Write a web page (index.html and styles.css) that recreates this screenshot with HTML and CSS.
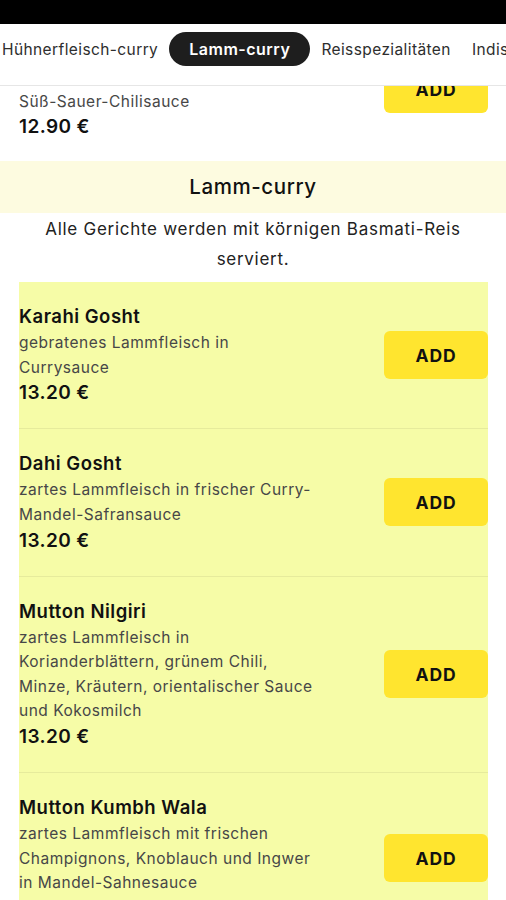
FILE: index.html
```html
<!DOCTYPE html>
<html lang="de">
<head>
<meta charset="utf-8">
<title>Lamm-curry</title>
<link rel="stylesheet" href="styles.css">
</head>
<body>
<div class="app">
  <div class="status-bar"></div>
  <nav class="tabs">
    <div class="tabs-track">
      <span class="tab">Hühnerfleisch-curry</span>
      <span class="tab tab-active">Lamm-curry</span>
      <span class="tab">Reisspezialitäten</span>
      <span class="tab">Indische Brote</span>
    </div>
  </nav>
  <main class="viewport">
    <div class="item item-prev">
      <div class="item-info">
        <div class="item-title">Chicken Chilli</div>
        <div class="item-desc">gebratenes Hühnerfleisch in <span class="nowrap">Süß-Sauer-Chilisauce</span></div>
        <div class="item-price">12.90 €</div>
      </div>
      <button class="add-btn">ADD</button>
    </div>

    <section class="section">
      <h2 class="section-title">Lamm-curry</h2>
      <p class="section-desc">Alle Gerichte werden mit körnigen Basmati-Reis serviert.</p>
      <div class="list">
        <div class="item">
          <div class="item-info">
            <div class="item-title">Karahi Gosht</div>
            <div class="item-desc">gebratenes Lammfleisch in Currysauce</div>
            <div class="item-price">13.20 €</div>
          </div>
          <button class="add-btn">ADD</button>
        </div>
        <div class="item">
          <div class="item-info">
            <div class="item-title">Dahi Gosht</div>
            <div class="item-desc">zartes Lammfleisch in frischer Curry-Mandel-Safransauce</div>
            <div class="item-price">13.20 €</div>
          </div>
          <button class="add-btn">ADD</button>
        </div>
        <div class="item">
          <div class="item-info">
            <div class="item-title">Mutton Nilgiri</div>
            <div class="item-desc">zartes Lammfleisch in Korianderblättern, grünem Chili, Minze, Kräutern, orientalischer Sauce und Kokosmilch</div>
            <div class="item-price">13.20 €</div>
          </div>
          <button class="add-btn">ADD</button>
        </div>
        <div class="item">
          <div class="item-info">
            <div class="item-title">Mutton Kumbh Wala</div>
            <div class="item-desc">zartes Lammfleisch mit frischen Champignons, Knoblauch und Ingwer in Mandel-Sahnesauce</div>
            <div class="item-price">13.20 €</div>
          </div>
          <button class="add-btn">ADD</button>
        </div>
      </div>
    </section>
  </main>
</div>
</body>
</html>
```
FILE: styles.css
```css
* { box-sizing: border-box; }
html, body { margin: 0; padding: 0; background: #fff; }
body {
  font-family: Inter, "Noto Sans", "Liberation Sans", sans-serif;
  color: #111;
  width: 506px;
  height: 900px;
  overflow: hidden;
}
.app { display: flex; flex-direction: column; height: 900px; }
.status-bar { height: 24px; background: #000; flex: none; }
.tabs {
  flex: none;
  height: 62px;
  background: #fff;
  border-bottom: 1px solid #e6e6e6;
  overflow: hidden;
  padding-top: 8px;
  position: relative;
  z-index: 2;
}
.tabs-track {
  display: flex;
  align-items: center;
  gap: 1px;
  margin-left: -8px;
  white-space: nowrap;
}
.tab {
  height: 34px;
  display: flex;
  align-items: center;
  padding: 0 10px;
  font-size: 15.5px;
  letter-spacing: 0.4px;
  color: #2e2e2e;
}
.tab-active {
  background: #1e1e1e;
  color: #fff;
  border-radius: 17px;
  padding: 0 20px;
  font-weight: 600;
  font-size: 16px;
  letter-spacing: 0.5px;
}
.viewport { flex: 1; overflow: hidden; }

.item {
  display: flex;
  align-items: center;
  justify-content: space-between;
  padding: 22px 0;
  border-bottom: 1px solid #e6eb9c;
}
.item-prev {
  margin: -70px 18px 0 19px;
  border-bottom: none;
  padding-bottom: 21px;
}
.nowrap { white-space: nowrap; }
.item-info { width: 297px; }
.item-title {
  font-size: 18.5px;
  font-weight: 600;
  letter-spacing: 0.5px;
  line-height: 24px;
  margin-bottom: 3px;
  color: #111;
}
.item-desc {
  font-size: 15.5px;
  letter-spacing: 0.5px;
  line-height: 24.6px;
  color: #474747;
}
.item-price {
  font-size: 19px;
  font-weight: 600;
  letter-spacing: 0.4px;
  line-height: 26px;
  color: #111;
}
.add-btn {
  flex: none;
  width: 104px;
  height: 48px;
  border: none;
  border-radius: 6px;
  background: #ffe52f;
  font-family: inherit;
  font-size: 17.5px;
  font-weight: 700;
  color: #111;
  letter-spacing: 0.9px;
}

.section-title {
  margin: 0;
  height: 52px;
  line-height: 52px;
  text-align: center;
  background: #fdfbe0;
  font-size: 20.5px;
  font-weight: 500;
  letter-spacing: 0.6px;
  color: #111;
}
.section-desc {
  margin: 1px 19px 8px;
  text-align: center;
  font-size: 17px;
  letter-spacing: 0.72px;
  line-height: 30px;
  color: #222;
}
.list {
  margin: 0 18px 0 19px;
  background: #f6fca7;
}
.list .item:last-child { border-bottom: none; }
```
